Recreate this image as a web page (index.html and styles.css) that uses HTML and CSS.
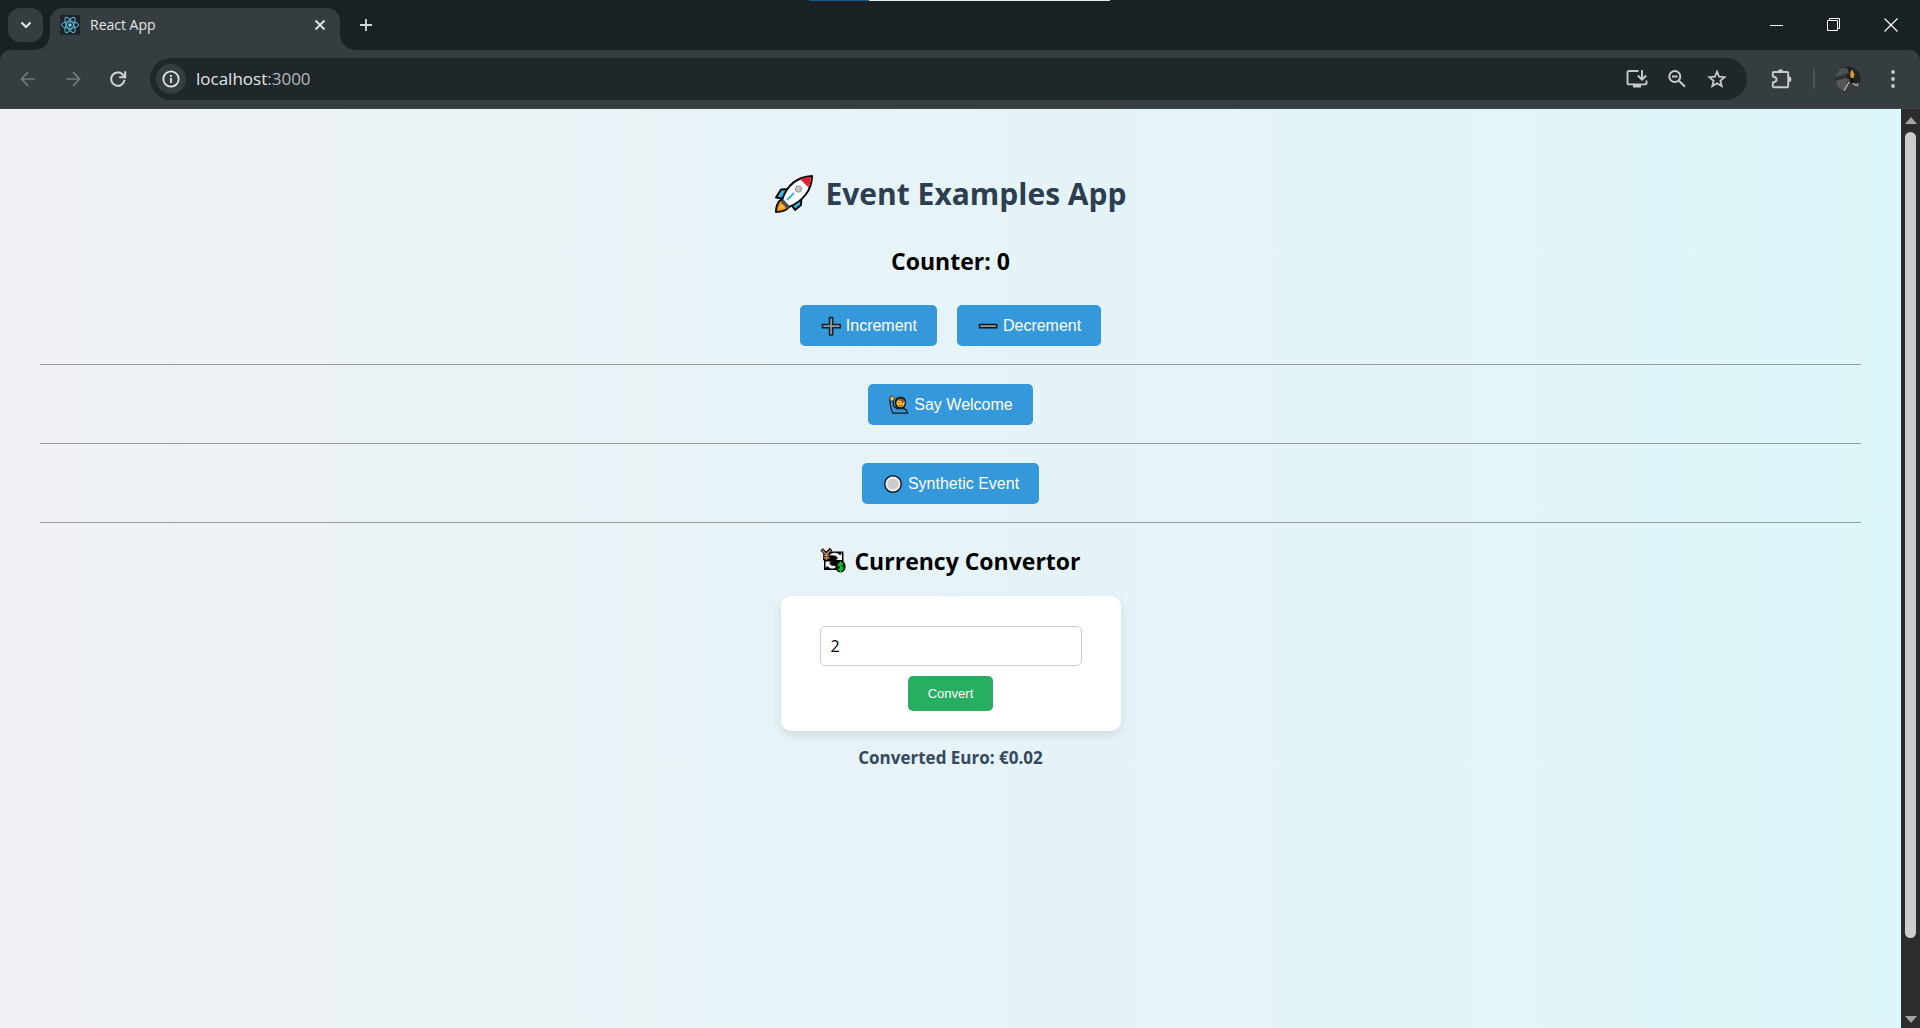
FILE: index.html
```html
<!DOCTYPE html>
<html lang="en">
<head>
<meta charset="utf-8">
<meta name="viewport" content="width=device-width, initial-scale=1">
<title>React App</title>
<link rel="stylesheet" href="styles.css">
</head>
<body>
<div class="window">
  <div class="snap-line"></div>
  <header class="tabstrip">
    <button class="tab-search" aria-label="Search tabs"><svg width="12" height="8" viewBox="0 0 12 8"><path d="M1.5 1.5 6 6l4.500-4.500" fill="none" stroke="#e3e6e7" stroke-width="2.200"/></svg></button>
    <div class="tab">
      <svg class="favicon" width="20" height="20" viewBox="0 0 20 20"><rect width="20" height="20" rx="1" fill="#20242a"/><g fill="none" stroke="#58b9d2" stroke-width="1"><ellipse cx="10" cy="10" rx="8.600" ry="3.300"/><ellipse cx="10" cy="10" rx="8.600" ry="3.300" transform="rotate(60 10 10)"/><ellipse cx="10" cy="10" rx="8.600" ry="3.300" transform="rotate(120 10 10)"/></g><circle cx="10" cy="10" r="1.700" fill="#61dafb"/></svg>
      <span class="tab-title">React App</span>
      <button class="tab-close" aria-label="Close tab"><svg width="12" height="12" viewBox="0 0 12 12"><path d="m1.500 1.500 9 9m0-9-9 9" stroke="#e3e6e7" stroke-width="1.800"/></svg></button>
    </div>
    <button class="new-tab" aria-label="New tab"><svg width="14" height="14" viewBox="0 0 14 14"><path d="M7 1v12M1 7h12" stroke="#d5d9da" stroke-width="1.800"/></svg></button>
    <div class="window-controls">
      <button aria-label="Minimize"><svg width="14" height="14" viewBox="0 0 14 14"><path d="M0 7.500h13" stroke="#fff"/></svg></button>
      <button aria-label="Restore"><svg width="14" height="14" viewBox="0 0 14 14"><path d="M.5 2.500h10v10H.5zM2.500 2.500v-2h10v10h-2" fill="none" stroke="#fff"/></svg></button>
      <button aria-label="Close"><svg width="14" height="14" viewBox="0 0 14 14"><path d="m.5.5 13 13m0-13-13 13" stroke="#fff" stroke-width="1.200"/></svg></button>
    </div>
  </header>

  <nav class="toolbar" aria-label="Browser toolbar">
    <button class="tool" aria-label="Back"><svg width="16" height="16" viewBox="0 0 16 16"><path d="M15 8H1.500M8 1.200 1.500 8 8 14.800" fill="none" stroke="#747a7c" stroke-width="1.700"/></svg></button>
    <button class="tool" aria-label="Forward"><svg width="16" height="16" viewBox="0 0 16 16"><path d="M1 8h13.500M8 1.200 14.500 8 8 14.800" fill="none" stroke="#747a7c" stroke-width="1.700"/></svg></button>
    <button class="tool" aria-label="Reload"><svg width="18" height="18" viewBox="0 0 18 18"><path d="M15.500 9.800A6.700 6.700 0 1 1 14 4.800l1.800 1.900" fill="none" stroke="#d0d4d5" stroke-width="2"/><path d="M16.200 1.200v6h-6" fill="none" stroke="#d0d4d5" stroke-width="2"/></svg></button>
    <div class="omnibox">
      <button class="site-info" aria-label="Site information"><svg width="18" height="18" viewBox="0 0 18 18"><circle cx="9" cy="9" r="7.700" fill="none" stroke="#e3e6e7" stroke-width="1.800"/><path d="M9 8v5M9 5v2" stroke="#e3e6e7" stroke-width="1.800"/></svg></button>
      <a class="url" href="#"><span class="host">localhost</span>:3000</a>
      <button class="omni-action" aria-label="Install app"><svg width="22" height="20" viewBox="0 0 22 20"><path d="M12.500 2H3.200A1.700 1.700 0 0 0 1.500 3.700v10A1.700 1.700 0 0 0 3.200 15.400h15.600a1.700 1.700 0 0 0 1.700-1.700v-2.200M16 1v9.500M11.800 6.500l4.200 4.200 4.200-4.200" fill="none" stroke="#c7cbcc" stroke-width="1.900"/><path d="M7 15h8v3.500H7z" fill="#c7cbcc"/></svg></button>
      <button class="omni-action" aria-label="Zoom"><svg width="20" height="20" viewBox="0 0 20 20"><circle cx="7.800" cy="7.500" r="5.500" fill="none" stroke="#c7cbcc" stroke-width="2"/><path d="m12 11.700 6 6M5 7.500h5.600" stroke="#c7cbcc" stroke-width="2"/></svg></button>
      <button class="omni-action" aria-label="Bookmark this tab"><svg width="20" height="20" viewBox="0 0 20 20"><path d="m10 2.700 2.100 5 5.500.5-4.200 3.600 1.300 5.300L10 14.300l-4.700 2.800 1.300-5.300-4.200-3.600 5.500-.5z" fill="none" stroke="#c7cbcc" stroke-width="1.800"/></svg></button>
    </div>
    <button class="tool" aria-label="Extensions"><svg width="22" height="22" viewBox="0 0 22 22"><path d="M3.800 4h13.400a1 1 0 0 1 1 1v13.200a1 1 0 0 1-1 1H3.800a1 1 0 0 1-1-1v-3.700c2.600-.4 3.800-1.400 3.800-3s-1.200-2.600-3.800-3V5a1 1 0 0 1 1-1z" fill="none" stroke="#c7cbcc" stroke-width="1.900"/><path d="M7.800 4a2.700 2.700 0 0 1 5.400 0zM18.500 8.300a2.900 2.900 0 0 1 0 5.800z" fill="#c7cbcc"/></svg></button>
    <span class="divider"></span>
    <button class="avatar" aria-label="Profile"><svg width="26" height="26" viewBox="0 0 26 26"><defs><clipPath id="face"><circle cx="13" cy="13" r="12.500"/></clipPath></defs><g clip-path="url(#face)"><path fill="#20251f" d="M0 0h26v26H0z"/><path fill="#4b5452" d="M3 2h9l2 5-9 3-5 2z"/><path fill="#2c342b" d="m0 12 12-4v5L0 16z"/><path fill="#555858" d="m0 15 11-3 4 2-6 12H3z"/><path fill="#3c3f3f" d="m12 15 3-1 8 12H10z"/><path d="m14 16-5 9M17 16l4 4" stroke="#cfcbbb" stroke-width="1.100"/><path d="M16 5.500h2l1.500 3-1 3.500h-2.500l-1-3.500z" fill="#d5933f"/><path d="M16.500 4h1.300v2.500h-1.300z" fill="#edb45c"/><path d="M15.500 12h3l.5 5h-3.500z" fill="#101210"/><path d="m19 18 5-1-1 5z" fill="#858a84"/></g></svg></button>
    <button class="tool" aria-label="Menu"><svg width="4" height="18" viewBox="0 0 4 18" fill="#c7cbcc"><circle cx="2" cy="2" r="1.900"/><circle cx="2" cy="9" r="1.900"/><circle cx="2" cy="16" r="1.900"/></svg></button>
  </nav>

  <div class="viewport">
    <main class="app">
      <h1><svg width="40" height="40" viewBox="0 0 40 40"><g stroke="#0a0a0a" stroke-width="2" stroke-linejoin="round"><path d="m8 25 7 8c-3 4-7 5-13 5 0-6 1-10 6-13z" fill="#f7941d"/><path d="m15 15-8 .5-5 8 9 1.500z" fill="#35b5e5"/><path d="m17 30 4 6 6-5 .5-9z" fill="#35b5e5"/><path d="M8 26c4-12 13-23 30-24 0 14-9 25-23 31z" fill="#fff"/></g><path d="M26 5Q31 3 37 3q0 5-2.500 10.500z" fill="#e81c35"/><path d="m9 25 7 8-3 2-6-7z" fill="#505050"/><path d="m4 36 3-6 4 3z" fill="#fcc21b"/><path d="m13 26 7-7" stroke="#35b5e5" stroke-width="2"/><circle cx="24.500" cy="15" r="3.200" fill="#c4c4c4" stroke="#999"/></svg><span>Event Examples App</span></h1>
      <h2>Counter: 0</h2>
      <div class="actions">
        <button class="btn"><svg width="22" height="20" viewBox="0 0 22 20"><path d="M9.500 1.500h3.200v7h7.500v3.200h-7.500v7.200H9.500v-7.200H2.500V8.500h7z" fill="#9b9b9b" stroke="#16222b" stroke-width="1.500"/></svg>Increment</button>
        <button class="btn"><svg width="22" height="20" viewBox="0 0 22 20"><path d="M2.500 8.500h17.200v3.200H2.500z" fill="#9b9b9b" stroke="#10171d" stroke-width="1.500"/></svg>Decrement</button>
      </div>
      <hr>
      <div class="actions">
        <button class="btn"><svg width="22" height="20" viewBox="0 0 22 20"><path d="M2 5c0 4 0 8 3 13.200h14.500c-.4-3-2-4.600-5-4.600H9L5.500 11V5z" fill="#3595d8" stroke="#111a21" stroke-width="1.300"/><path d="M2 2 4.500 1l2 1.500L5.500 6H2z" fill="#ffc23d" stroke="#111a21" stroke-width=".8"/><path d="M7 6c.5-5.500 11-6 11 1 0 4-1.500 6-3 7h-5C8 12 6.500 10 7 6z" fill="#16191c"/><circle cx="12.600" cy="8" r="4.200" fill="#ffc23d"/><path d="M8.500 6.500C9 2.500 16 2.300 17 7c-3 .5-4.500-.5-6-2z" fill="#9a5b27"/><path d="M11 7v1.200M14.500 7v1.200M10.800 10q1.800 2 3.600 0" fill="none" stroke="#442c12"/></svg>Say Welcome</button>
      </div>
      <hr>
      <div class="actions">
        <button class="btn"><svg width="22" height="20" viewBox="0 0 22 20"><circle cx="11" cy="10" r="8.300" fill="#f4f4f4" stroke="#15202a" stroke-width="1.500"/><circle cx="11" cy="10" r="5.600" fill="#ccc" stroke="#ddd"/></svg>Synthetic Event</button>
      </div>
      <hr>
      <h2 class="section-title"><svg width="26" height="26" viewBox="0 0 26 26"><path d="M4 3.500h19.500V22H4z" fill="#050505"/><path d="M9 7.500c4-4 9-3 11 0l2-2.500v7h-6l2-2c-2-2.500-5-3-9-2.500zM5.500 13.500H11l-1.800 2c1.800 2.500 5 3 8.800 2-3.500 4.500-8.500 3.500-10.800.5L5.500 20z" fill="#f2f2f2"/><path d="m1.500 1.500 5 4.500 4.500-5M6.500 6v6.500M3 7.500h7M3 10.500h7" fill="none" stroke="#000" stroke-width="3.400"/><path d="m2 2 4.500 4.500L10.500 2M6.500 6v6M3.500 7.500h6M3.500 10h6" fill="none" stroke="#b98a5e" stroke-width="1.600"/><ellipse cx="20.500" cy="18.500" rx="4.500" ry="5.500" fill="#0b230f" stroke="#000" stroke-width="1.200"/><path d="M23 16.200q-4-1.500-4.500.6c0 2.400 4.500 1 4.500 3.400 0 2-3.200 1.800-4.800.8M20.700 13.500v11" fill="none" stroke="#16c62e" stroke-width="1.500"/></svg><span>Currency Convertor</span></h2>
      <form class="converter" onsubmit="return false">
        <input type="number" value="2" aria-label="Amount in rupees">
        <button class="convert">Convert</button>
      </form>
      <p class="result">Converted Euro: €0.02</p>
    </main>
    <div class="scrollbar" aria-hidden="true">
      <svg width="12" height="7" viewBox="0 0 12 7"><path d="m6 0 6 7H0z" fill="#a3a3a3"/></svg>
      <div class="track"><div class="thumb"></div></div>
      <svg width="12" height="7" viewBox="0 0 12 7"><path d="m6 7 6-7H0z" fill="#a3a3a3"/></svg>
    </div>
  </div>
</div>
</body>
</html>
```

FILE: styles.css
```css
* { box-sizing: border-box; }

body {
  margin: 0;
  font-family: "Segoe UI", "Open Sans", "Noto Sans", sans-serif;
  color: #000;
}

button {
  margin: 0;
  padding: 0;
  border: 0;
  background: none;
  color: inherit;
  font-family: "Liberation Sans", Arial, sans-serif;
  cursor: pointer;
}

svg { display: block; flex: none; }

.window {
  position: relative;
  display: flex;
  flex-direction: column;
  height: 100vh;
  background: #1a2124;
}

.snap-line {
  position: absolute;
  top: 0;
  left: 50%;
  width: 301px;
  height: 1px;
  margin-left: -151px;
  background: linear-gradient(to right, #195a86 20%, #e3eaeb 20%);
}

/* Tab strip */
.tabstrip {
  display: flex;
  flex: none;
  align-items: flex-start;
  height: 50px;
  padding: 8px 1px 0 8px;
}

.tab-search {
  display: grid;
  place-items: center;
  width: 35px;
  height: 34px;
  margin-right: 7px;
  border-radius: 12px;
  background: #353d40;
}

.tab {
  position: relative;
  display: flex;
  align-items: center;
  width: 290px;
  height: 42px;
  padding: 0 10px 8px;
  border-radius: 13px 13px 0 0;
  background: #353d40;
}

.tab::before,
.tab::after {
  content: "";
  position: absolute;
  bottom: 0;
  width: 14px;
  height: 14px;
}

.tab::before {
  right: 100%;
  background: radial-gradient(circle at 0 0, transparent 13px, #353d40 14px);
}

.tab::after {
  left: 100%;
  background: radial-gradient(circle at 100% 0, transparent 13px, #353d40 14px);
}

.tab-title {
  flex: 1;
  margin-left: 10px;
  color: #e3e6e7;
  font-size: 14px;
  line-height: 20px;
}

.tab-close {
  display: grid;
  place-items: center;
  width: 20px;
  height: 20px;
}

.new-tab {
  display: grid;
  place-items: center;
  width: 34px;
  height: 34px;
  margin-left: 9px;
}

.window-controls {
  display: flex;
  margin-left: auto;
}

.window-controls button {
  display: grid;
  place-items: center;
  width: 57px;
  height: 34px;
}

/* Toolbar */
.toolbar {
  display: flex;
  flex: none;
  align-items: center;
  height: 59px;
  padding: 0 5px;
  border-bottom: 1px solid #41484a;
  border-radius: 10px 10px 0 0;
  background: #353d40;
}

.tool {
  display: grid;
  place-items: center;
  width: 45px;
  height: 42px;
}

.omnibox {
  display: flex;
  flex: 1;
  align-items: center;
  height: 42px;
  margin: 0 11px 0 10px;
  padding: 0 10px 0 6px;
  border-radius: 21px;
  background: #1f272a;
}

.site-info {
  display: grid;
  place-items: center;
  width: 30px;
  height: 30px;
  border-radius: 50%;
  background: #353d40;
}

.url {
  flex: 1;
  margin-left: 10px;
  color: #b5babb;
  font-size: 17px;
  line-height: 24px;
  text-decoration: none;
}

.host { color: #e3e6e7; }

.omni-action {
  display: grid;
  place-items: center;
  width: 40px;
  height: 40px;
}

.divider {
  width: 2px;
  height: 20px;
  margin: 0 20px 0 10px;
  background: #4c5457;
}

.avatar { margin-right: 9px; }

/* Page area */
.viewport {
  display: flex;
  flex: 1;
  min-height: 0;
}

.app {
  flex: 1;
  overflow: hidden;
  padding: 65px 40px 40px;
  background: linear-gradient(to right, #f0f1f5, #ecf2f5 15%, #e6f3f7 50%, #e1f5f9 85%, #dcf7f9);
  text-align: center;
}

h1,
h2 {
  display: flex;
  align-items: center;
  justify-content: center;
  margin: 0;
}

h1 {
  gap: 11px;
  margin-bottom: 31px;
  color: #2c3e50;
  font-size: 30px;
  line-height: 40px;
}

h2 {
  gap: 8px;
  margin-bottom: 28px;
  font-size: 23px;
  line-height: 32px;
}

.actions {
  display: flex;
  justify-content: center;
  gap: 20px;
}

.btn {
  display: flex;
  align-items: center;
  gap: 4px;
  height: 41px;
  padding: 0 20px;
  border-radius: 5px;
  background: #3498db;
  color: #fff;
  font-size: 16px;
}

hr {
  height: 1px;
  margin: 18px 0 19px;
  border: 0;
  background: #999c9e;
}

.section-title { margin: 22px 0 19px; }

.converter {
  display: flex;
  flex-direction: column;
  align-items: center;
  gap: 10px;
  max-width: 340px;
  margin: 0 auto 15px;
  padding: 30px 20px 20px;
  border-radius: 10px;
  background: #fff;
  box-shadow: 0 4px 10px rgba(0, 0, 0, 0.1);
}

.converter input {
  width: 262px;
  height: 40px;
  padding: 0 10px;
  border: 1px solid #ccc;
  border-radius: 5px;
  background: #fff;
  color: #000;
  font: 16px "Segoe UI", "Open Sans", sans-serif;
  appearance: textfield;
}

.convert {
  height: 35px;
  padding: 0 20px;
  border-radius: 5px;
  background: #27ae60;
  color: #fff;
  font-size: 13px;
}

.result {
  margin: 0;
  color: #34495e;
  font-size: 17px;
  font-weight: 700;
  line-height: 24px;
}

/* Scrollbar */
.scrollbar {
  display: flex;
  flex-direction: column;
  align-items: center;
  gap: 8px;
  width: 19px;
  padding: 8px 0 5px;
  background: #2c2c2c;
}

.track {
  flex: 1;
  width: 11px;
}

.thumb {
  height: 92%;
  border-radius: 6px;
  background: #cdcdcd;
}
```
